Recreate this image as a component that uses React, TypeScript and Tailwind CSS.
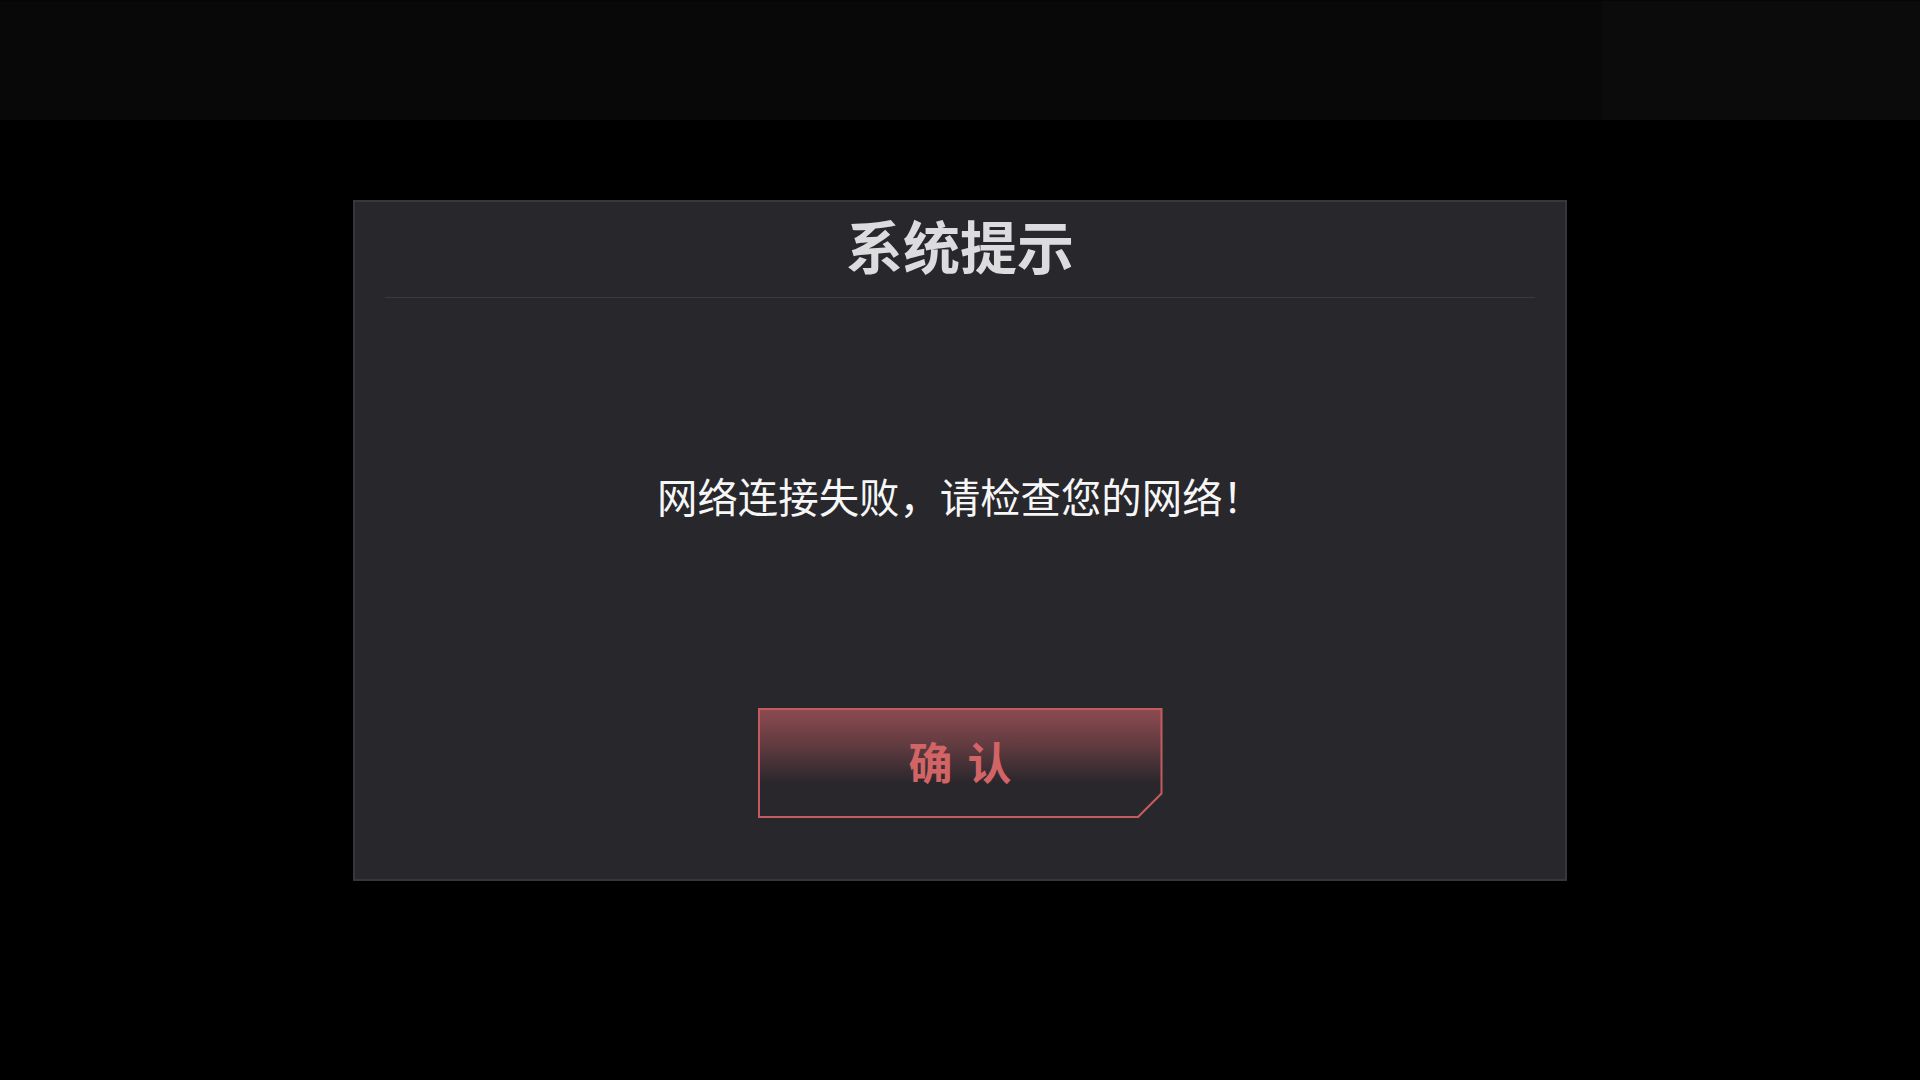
import React from "react";

const cjk = { fontFamily: '"Noto Sans CJK SC", "Noto Sans", sans-serif' };

function ConfirmButton({ label }: { label: string[] }) {
  return (
    <button
      type="button"
      className="w-[405px] h-[110px] bg-[#c45c5f] p-[2px] [clip-path:polygon(0_0,100%_0,100%_calc(100%-24px),calc(100%-24px)_100%,0_100%)]"
    >
      <div className="w-full h-full flex items-center justify-center gap-[15px] pb-[5px] bg-[linear-gradient(to_bottom,#8b4b50_0%,#5e3a3f_35%,#2a272c_68%,#28272c_100%)] [clip-path:polygon(0_0,100%_0,100%_calc(100%-23px),calc(100%-23px)_100%,0_100%)]">
        {label.map((ch) => (
          <span key={ch} className="text-[44px] font-bold leading-none text-[#d26466]">
            {ch}
          </span>
        ))}
      </div>
    </button>
  );
}

export default function App() {
  return (
    <div className="w-full h-screen bg-black overflow-hidden" style={cjk}>
      {/* Top bar */}
      <div className="flex h-[120px] border-t border-[#050505]">
        <div className="flex-1 bg-[#080808]" />
        <div className="w-[318px] bg-[#0b0b0b]" />
      </div>

      {/* Dialog */}
      <div className="mx-auto mt-[80px] w-[1214px] h-[681px] flex flex-col bg-[#28272c] border-2 border-[#36363b]">
        <div className="h-[96px] mx-[30px] flex items-center justify-center border-b border-[#3a3a3f] pb-[10px]">
          <h1 className="text-[57px] font-bold leading-none text-[#dcdcdf]">系统提示</h1>
        </div>

        <div className="flex-1 flex items-center justify-center pb-[13px]">
          <p className="text-[40.4px] leading-none text-[#f6f6f6]">网络连接失败，请检查您的网络！</p>
        </div>

        <div className="flex justify-center pb-[61px]">
          <ConfirmButton label={["确", "认"]} />
        </div>
      </div>
    </div>
  );
}
